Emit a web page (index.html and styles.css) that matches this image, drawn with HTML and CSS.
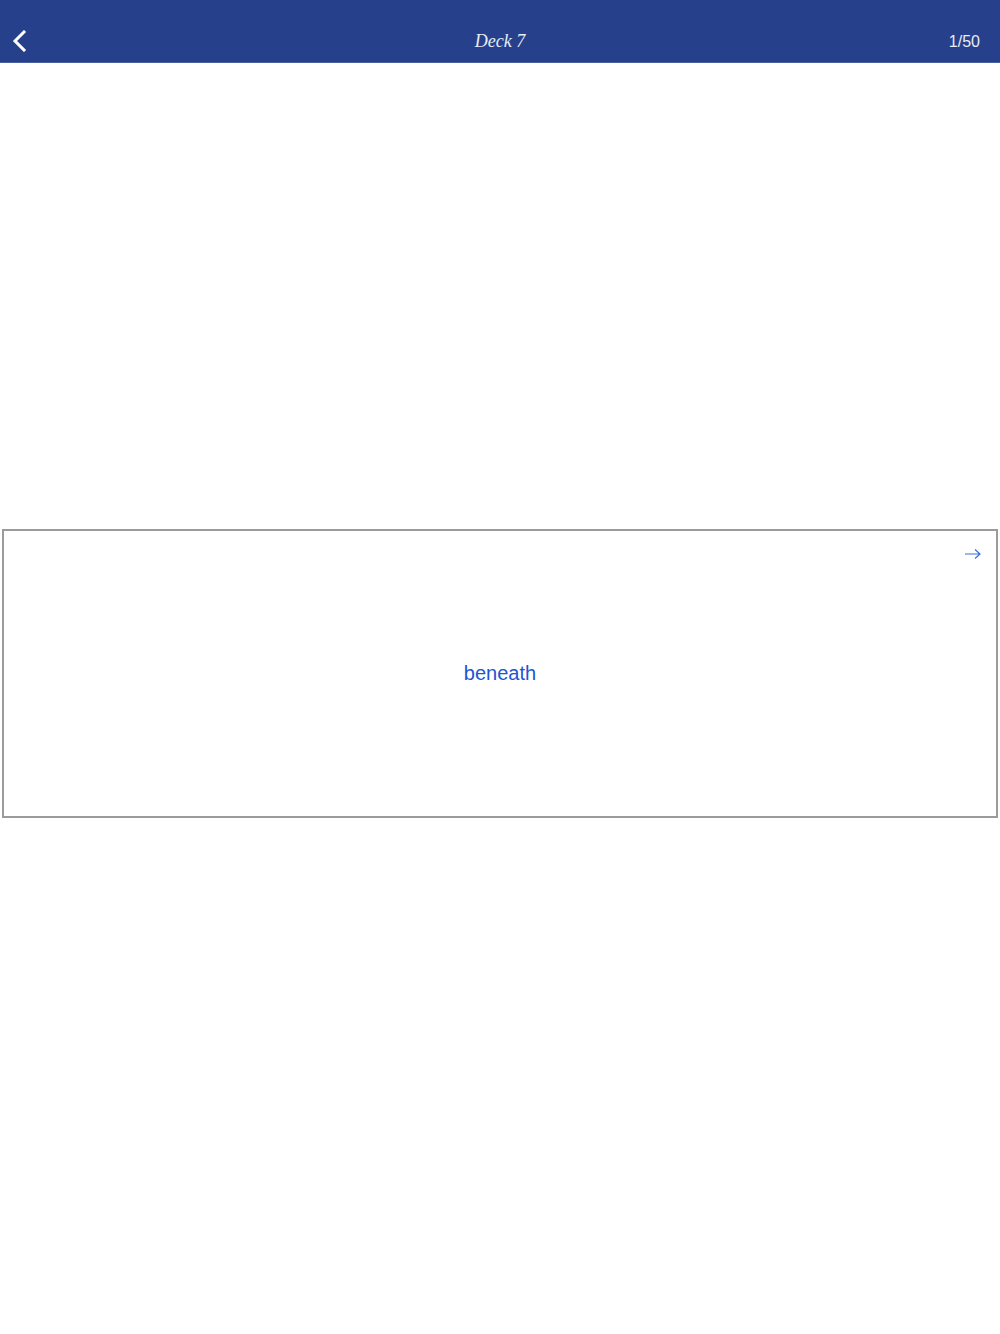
FILE: index.html
```html
<!DOCTYPE html>
<html lang="en">
<head>
  <meta charset="UTF-8" />
  <meta name="viewport" content="width=device-width, initial-scale=1.0" />
  <title>Deck 7</title>
  <link rel="stylesheet" href="styles.css">
</head>
<body>
  <header class="topbar">
    <button class="back-btn" aria-label="Back">
      <svg width="16" height="22" viewBox="0 0 16 22">
        <path d="M12 2 L3 11 L12 20" fill="none" stroke="#fff" stroke-width="3" stroke-linecap="square" />
      </svg>
    </button>
    <h1 class="deck-title">Deck 7</h1>
    <span class="counter">1/50</span>
  </header>

  <main class="stage">
    <div class="card">
      <svg class="flip-icon" width="18" height="12" viewBox="0 0 18 12">
        <path d="M1 6 H16 M11 1.5 L16 6 L11 10.5" fill="none" stroke="#3b6fd8" stroke-width="1.2" />
      </svg>
      <p class="word">beneath</p>
    </div>
  </main>
</body>
</html>
```

FILE: styles.css
```css
body {
  margin: 0;
  font-family: 'Liberation Sans', Arial, sans-serif;
  background: #ffffff;
}

.topbar {
  height: 63px;
  box-sizing: border-box;
  background-color: #26408b;
  border-bottom: 1px solid #4a5f9f;
  display: flex;
  align-items: center;
  justify-content: space-between;
  padding: 0 20px 0 10px;
  position: relative;
}

.back-btn {
  background: none;
  border: none;
  padding: 0;
  margin-top: 20px;
  width: 20px;
  height: 22px;
  cursor: pointer;
}

.deck-title {
  position: absolute;
  left: 0;
  right: 0;
  top: 31px;
  margin: 0;
  text-align: center;
  font-family: 'Liberation Serif', 'Times New Roman', serif;
  font-style: italic;
  font-weight: normal;
  font-size: 18px;
  color: #e8ecf6;
  pointer-events: none;
}

.counter {
  margin-top: 22px;
  color: #e8ecf6;
  font-size: 16px;
}

.stage {
  padding: 466px 2px 0;
}

.card {
  position: relative;
  height: 285px;
  border: 2px solid #9b9b9b;
  display: flex;
  align-items: center;
  justify-content: center;
}

.flip-icon {
  position: absolute;
  top: 17px;
  right: 14px;
}

.word {
  margin: 0;
  font-size: 20px;
  color: #1d55d4;
}
```
